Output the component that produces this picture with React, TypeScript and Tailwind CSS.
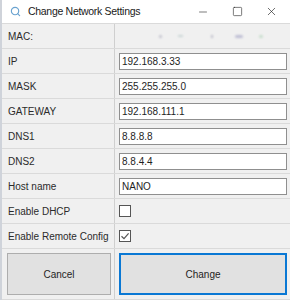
import { Minus, Square, X, Search } from "lucide-react";

type Field = { label: string; value: string };

const fields: Field[] = [
  { label: "IP", value: "192.168.3.33" },
  { label: "MASK", value: "255.255.255.0" },
  { label: "GATEWAY", value: "192.168.111.1" },
  { label: "DNS1", value: "8.8.8.8" },
  { label: "DNS2", value: "8.8.4.4" },
  { label: "Host name", value: "NANO" },
];

function Row({ label, children }: { label: string; children?: React.ReactNode }) {
  return (
    <div className="flex h-[25px] border-b border-[#dadada]">
      <div className="w-[113px] shrink-0 border-r border-[#cfcfcf] pl-[6px] flex items-center text-[#2b2b2b] whitespace-nowrap">
        {label}
      </div>
      <div className="flex-1 flex items-center pl-[4px] pr-[3px]">{children}</div>
    </div>
  );
}

function Checkbox({ checked }: { checked?: boolean }) {
  return (
    <div className="w-[12px] h-[12px] border border-[#555] bg-white flex items-center justify-center">
      {checked && (
        <svg width="10" height="10" viewBox="0 0 10 10">
          <path d="M1.5 5.2 L4 7.6 L8.6 2.4" fill="none" stroke="#555" strokeWidth="1.2" />
        </svg>
      )}
    </div>
  );
}

export default function App() {
  return (
    <div
      className="w-[290px] h-[300px] bg-[#f0f0f0] border-l-2 border-[#cfd3da] flex flex-col text-[10px] overflow-hidden"
      style={{ fontFamily: "Tahoma, 'Liberation Sans', Arial, sans-serif" }}
    >
      <div className="h-[24px] bg-white flex items-center border-b border-[#dadada] shrink-0">
        <Search size={11} strokeWidth={2.5} className="ml-[8px] text-[#6aa3d0]" />
        <span
          className="ml-[7px] text-[10.5px] tracking-[-0.3px] text-[#1a1a1a]"
          style={{ fontFamily: "'Segoe UI', 'Liberation Sans', Arial, sans-serif" }}
        >
          Change Network Settings
        </span>
        <div className="ml-auto flex items-center text-[#222]">
          <div className="w-[34px] flex justify-center">
            <Minus size={12} strokeWidth={1.2} />
          </div>
          <div className="w-[34px] flex justify-center">
            <Square size={11} strokeWidth={1.3} />
          </div>
          <div className="w-[34px] flex justify-center mr-[2px]">
            <X size={13} strokeWidth={1.2} />
          </div>
        </div>
      </div>

      <Row label="MAC:">
        <div className="flex items-center gap-[7px] pl-[40px] blur-[1px] opacity-70">
          <span className="w-[3px] h-[3px] rounded-full bg-[#aab]" />
          <span className="w-[2px]" />
          <span className="w-[5px] h-[2px] bg-[#bcc]" />
          <span className="w-[14px]" />
          <span className="w-[2px] h-[3px] bg-[#aab]" />
          <span className="w-[8px]" />
          <span className="w-[8px] h-[3px] rounded-full bg-[#a9a9c9]" />
          <span className="w-[2px]" />
          <span className="w-[4px] h-[3px] rounded-full bg-[#b6d6bd]" />
        </div>
      </Row>

      {fields.map((f) => (
        <Row key={f.label} label={f.label}>
          <div className="flex-1 h-[17px] bg-white border border-[#8f8f8f] flex items-center pl-[2px] text-[#1e1e1e]">
            {f.value}
          </div>
        </Row>
      ))}

      <Row label="Enable DHCP">
        <Checkbox />
      </Row>
      <Row label="Enable Remote Config">
        <Checkbox checked />
      </Row>

      <div className="flex flex-1 border-b border-[#dadada]">
        <div className="w-[113px] shrink-0 border-r border-[#cfcfcf] pl-[5px] pr-[3px] py-[4px]">
          <button className="w-full h-full bg-[#e1e1e1] border border-[#adadad] text-[#1e1e1e]">
            Cancel
          </button>
        </div>
        <div className="flex-1 pl-[4px] pr-[3px] py-[4px]">
          <button className="w-full h-full bg-[#e1e1e1] border-2 border-[#0a78d4] text-[#1e1e1e]">
            Change
          </button>
        </div>
      </div>
    </div>
  );
}
